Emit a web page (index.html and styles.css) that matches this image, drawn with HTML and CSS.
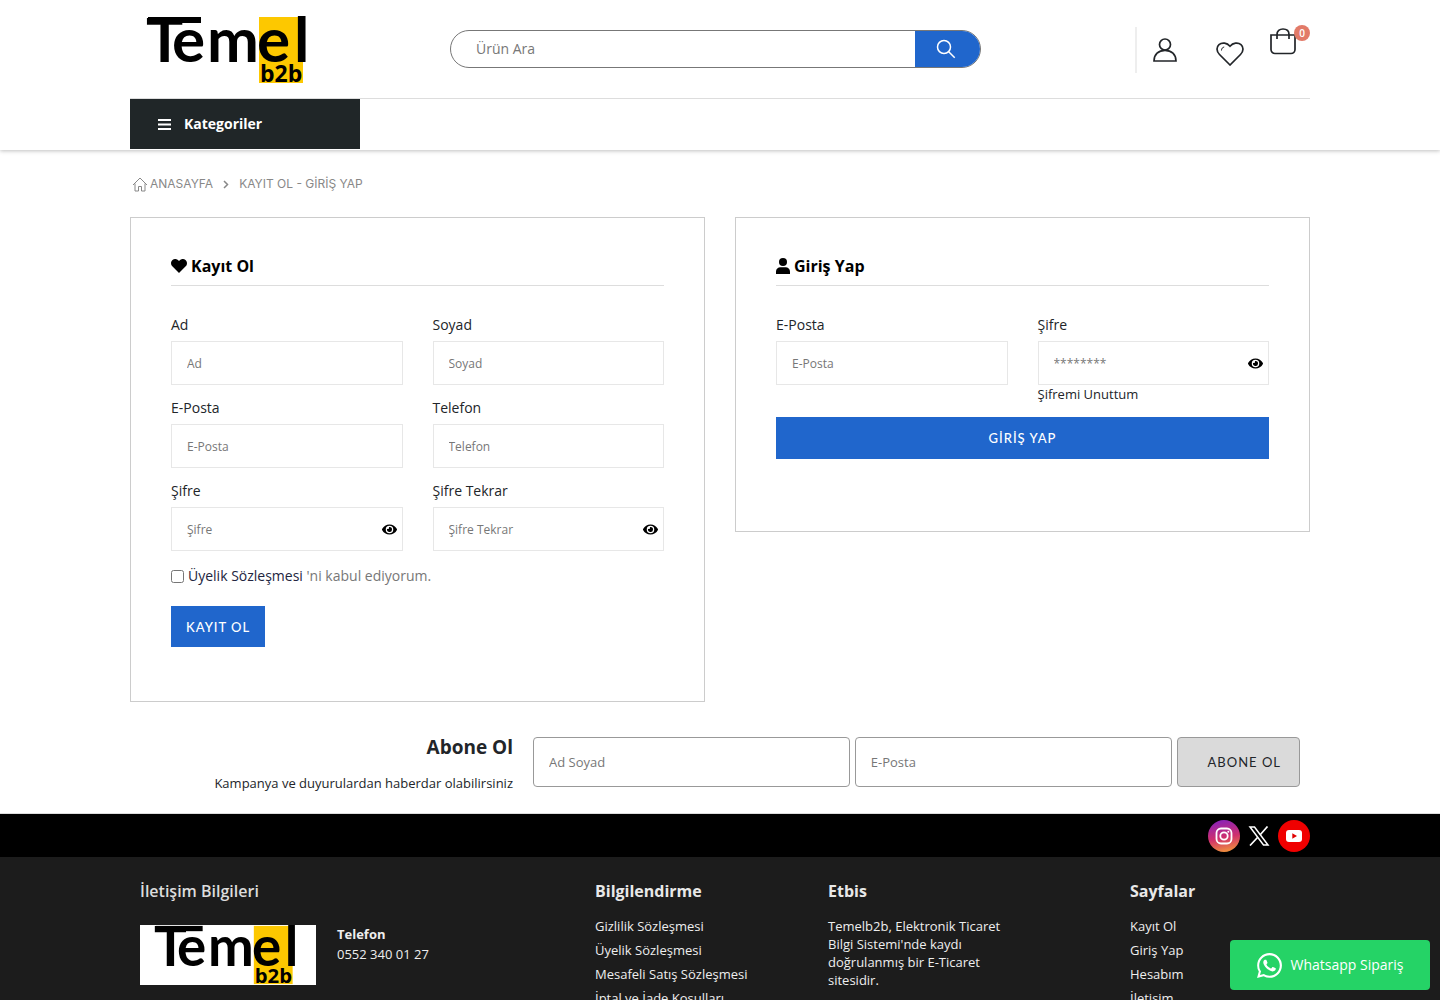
FILE: index.html
```html
<!DOCTYPE html>
<html lang="tr">
<head>
<meta charset="utf-8">
<meta name="viewport" content="width=device-width, initial-scale=1">
<title>Temel b2b - Kayıt Ol - Giriş Yap</title>
<link rel="stylesheet" href="styles.css">
</head>
<body>
<svg class="sprite" aria-hidden="true">
  <symbol id="logo" viewBox="0 0 176 68" preserveAspectRatio="xMinYMin meet">
    <rect x="129" y="1" width="44" height="66" fill="#fdc800"/>
    <rect x="18" y="1" width="53" height="6"/>
    <text class="logo-word" x="16 42 77 127 164" y="46">Temel</text>
    <text class="logo-sub" x="130" y="66">b2b</text>
  </symbol>
  <symbol id="eye" viewBox="0 0 576 512"><path fill-rule="evenodd" d="M572.500 241.400C518.300 135.600 410.900 64 288 64S57.700 135.600 3.500 241.400a32.400 32.400 0 0 0 0 29.200C57.700 376.400 165.100 448 288 448s230.300-71.600 284.500-177.400a32.400 32.400 0 0 0 0-29.200zM288 400a144 144 0 1 1 144-144 143.900 143.900 0 0 1-144 144z"/><path d="M288 160a95.300 95.300 0 0 0-25.300 3.800 47.900 47.900 0 0 1-66.900 66.900A95.800 95.800 0 1 0 288 160z"/></symbol>
</svg>

<header class="header">
  <div class="container header-top">
    <a class="brand" href="#" aria-label="Temel b2b"><svg class="logo"><use href="#logo"/></svg></a>
    <form class="search">
      <input type="search" placeholder="Ürün Ara" aria-label="Ürün Ara">
      <button type="button" aria-label="Ara">
        <svg width="20" height="20" viewBox="0 0 20 20" fill="none" stroke="currentColor" stroke-width="1.500"><circle cx="8" cy="8" r="6.500"/><path d="M12.700 12.700l6 6"/></svg>
      </button>
    </form>
    <nav class="actions" aria-label="Hesap">
      <a class="account" href="#" aria-label="Hesabım"><svg width="24" height="24" viewBox="0 0 24 24"><circle cx="12" cy="6.500" r="5.500"/><path d="M1 23c0-6.500 4.500-10.700 11-10.700S23 16.500 23 23z"/></svg></a>
      <a class="wish" href="#" aria-label="Favoriler"><svg width="28" height="24" viewBox="0 0 28 24"><path d="M14 23L3.500 12.500C.200 9.200.400 5 3 2.700c3-2.600 8-1.900 11 1.500 3-3.400 8-4.100 11-1.500 2.600 2.300 2.800 6.500-.500 9.800z"/><path d="M5.500 8.500c0-2 1-3.200 2.700-3.500" stroke-width="1"/></svg></a>
      <a class="cart" href="#" aria-label="Sepet"><svg width="26" height="27" viewBox="0 0 26 27"><path d="M1 7h24v14.500a4 4 0 0 1-4 4H5a4 4 0 0 1-4-4zM7 11V6.500C7 3 9.500 1 13 1s6 2 6 5.500V11"/></svg><span class="badge">0</span></a>
    </nav>
  </div>
  <div class="container menu-bar">
    <button class="categories" type="button">
      <svg width="13" height="11" viewBox="0 0 13 11" stroke="currentColor" stroke-width="2"><path d="M0 1h13M0 5.500h13M0 10h13"/></svg>
      Kategoriler
    </button>
  </div>
</header>

<main class="container">
  <nav class="crumbs" aria-label="Konum">
    <a href="#"><svg width="16" height="15" viewBox="0 0 16 15" fill="none" stroke="currentColor"><path d="M1 8l7-7 7 7M3 6.500V14h3.500V9.500h3V14H13V6.500"/></svg>ANASAYFA</a>
    <svg width="6" height="9" viewBox="0 0 6 9" fill="none" stroke="currentColor" stroke-width="1.500"><path d="M1 1l3.500 3.500L1 8"/></svg>
    <span>KAYIT OL - GİRİŞ YAP</span>
  </nav>

  <div class="cards">
    <section class="card">
      <h2><svg width="16" height="14" viewBox="0 0 16 14"><path d="M8 14L1.300 7.300C-.500 5.500-.400 2.600 1.500 1 3.300-.500 6-.300 7.500 1.400L8 2l.500-.600C10-.300 12.700-.500 14.500 1c1.900 1.600 2 4.500.200 6.300z"/></svg>Kayıt Ol</h2>
      <form>
        <div class="fields">
          <div class="field"><label for="ad">Ad</label><input id="ad" type="text" placeholder="Ad"></div>
          <div class="field"><label for="soyad">Soyad</label><input id="soyad" type="text" placeholder="Soyad"></div>
          <div class="field"><label for="eposta">E-Posta</label><input id="eposta" type="email" placeholder="E-Posta"></div>
          <div class="field"><label for="telefon">Telefon</label><input id="telefon" type="tel" placeholder="Telefon"></div>
          <div class="field"><label for="sifre">Şifre</label><span class="secret"><input id="sifre" type="password" placeholder="Şifre"><button type="button" aria-label="Göster"><svg><use href="#eye"/></svg></button></span></div>
          <div class="field"><label for="tekrar">Şifre Tekrar</label><span class="secret"><input id="tekrar" type="password" placeholder="Şifre Tekrar"><button type="button" aria-label="Göster"><svg><use href="#eye"/></svg></button></span></div>
        </div>
        <div class="agree"><input id="kabul" type="checkbox"><label for="kabul"><a href="#">Üyelik Sözleşmesi</a> 'ni kabul ediyorum.</label></div>
        <button class="btn" type="button">KAYIT OL</button>
      </form>
    </section>

    <section class="card">
      <h2><svg width="14" height="16" viewBox="0 0 14 16"><circle cx="7" cy="4" r="4"/><path d="M0 16v-2.500C0 11 2 9.300 4.300 9.300h5.400C12 9.300 14 11 14 13.500V16z"/></svg>Giriş Yap</h2>
      <form>
        <div class="fields">
          <div class="field"><label for="g-eposta">E-Posta</label><input id="g-eposta" type="email" placeholder="E-Posta"></div>
          <div class="field"><label for="g-sifre">Şifre</label><span class="secret"><input id="g-sifre" type="password" placeholder="********"><button type="button" aria-label="Göster"><svg><use href="#eye"/></svg></button></span><a class="forgot" href="#">Şifremi Unuttum</a></div>
        </div>
        <button class="btn wide" type="button">GİRİŞ YAP</button>
      </form>
    </section>
  </div>

  <section class="subscribe">
    <div class="subscribe-text"><h3>Abone Ol</h3><p>Kampanya ve duyurulardan haberdar olabilirsiniz</p></div>
    <form class="subscribe-form">
      <input type="text" placeholder="Ad Soyad" aria-label="Ad Soyad">
      <input type="email" placeholder="E-Posta" aria-label="E-Posta">
      <button type="button">ABONE OL</button>
    </form>
  </section>
</main>

<footer>
  <div class="social-bar">
    <div class="container social">
      <a href="#" aria-label="Instagram"><svg width="32" height="32" viewBox="0 0 32 32"><defs><linearGradient id="ig" x1="0.400" y1="0" x2="0.600" y2="1"><stop offset="0" stop-color="#8a22b8"/><stop offset=".55" stop-color="#d0306c"/><stop offset="1" stop-color="#f0923c"/></linearGradient></defs><circle cx="16" cy="16" r="16" fill="url(#ig)"/><g fill="none" stroke="#fff" stroke-width="1.800"><rect x="8.500" y="8.500" width="15" height="15" rx="4.500"/><circle cx="16" cy="16" r="3.700"/></g><circle cx="20.300" cy="11.700" r="1" fill="#fff"/></svg></a>
      <a href="#" aria-label="X"><svg width="22" height="20" viewBox="0 0 22 20" fill="none" stroke="#fff"><path d="M2 1h4.500L20 19h-4.500z" stroke-width="1.500"/><path d="M19.500.500L12 9M9.500 11.500L2 19.500" stroke-width="1.700"/></svg></a>
      <a href="#" aria-label="YouTube"><svg width="32" height="32" viewBox="0 0 32 32"><circle cx="16" cy="16" r="16" fill="#f00000"/><rect x="8" y="10" width="16" height="12" rx="3" fill="#fff"/><path d="M14.300 13.300v5.400l4.700-2.700z" fill="#e00000"/></svg></a>
    </div>
  </div>
  <div class="footer-main">
    <div class="container footer-grid">
      <section>
        <h4 class="light">İletişim Bilgileri</h4>
        <div class="contact">
          <span class="footer-brand"><svg><use href="#logo"/></svg></span>
          <p><strong>Telefon</strong><br>0552 340 01 27</p>
        </div>
      </section>
      <section>
        <h4>Bilgilendirme</h4>
        <ul><li><a href="#">Gizlilik Sözleşmesi</a></li><li><a href="#">Üyelik Sözleşmesi</a></li><li><a href="#">Mesafeli Satış Sözleşmesi</a></li><li><a href="#">İptal ve İade Koşulları</a></li></ul>
      </section>
      <section>
        <h4>Etbis</h4>
        <p class="etbis">Temelb2b, Elektronik Ticaret Bilgi Sistemi'nde kaydı doğrulanmış bir E-Ticaret sitesidir.</p>
      </section>
      <section>
        <h4>Sayfalar</h4>
        <ul><li><a href="#">Kayıt Ol</a></li><li><a href="#">Giriş Yap</a></li><li><a href="#">Hesabım</a></li><li><a href="#">İletişim</a></li></ul>
      </section>
    </div>
  </div>
</footer>

<a class="whatsapp" href="#">
  <svg width="25" height="25" viewBox="0 0 24 24" fill="currentColor"><path d="M.060 24l1.690-6.160A11.870 11.870 0 0 1 .160 11.890C.160 5.340 5.500 0 12.050 0a11.820 11.820 0 0 1 8.410 3.490 11.820 11.820 0 0 1 3.480 8.410c0 6.560-5.340 11.890-11.890 11.890a11.900 11.900 0 0 1-5.690-1.450zM6.600 20.190c1.740 1.030 3.280 1.620 5.390 1.620 5.450 0 9.890-4.430 9.890-9.880 0-5.460-4.420-9.890-9.880-9.890-5.450 0-9.890 4.430-9.890 9.880 0 2.230.650 3.890 1.750 5.630l-1 3.650zM18.050 14.730c-.080-.130-.270-.200-.570-.350-.300-.150-1.760-.870-2.030-.970-.270-.100-.470-.150-.670.150-.200.300-.770.970-.940 1.160-.170.200-.350.220-.640.080-.300-.150-1.260-.460-2.390-1.480-.880-.790-1.480-1.760-1.650-2.060-.170-.300-.020-.460.130-.610.130-.130.300-.350.450-.520.150-.170.200-.300.300-.500.100-.200.050-.370-.020-.520-.080-.150-.670-1.610-.920-2.210-.240-.580-.490-.500-.670-.510l-.570-.010c-.200 0-.520.070-.790.370s-1.040 1.020-1.040 2.480c0 1.460 1.060 2.880 1.210 3.070.150.200 2.100 3.200 5.080 4.490 2.960 1.280 2.960.850 3.490.800.540-.050 1.760-.720 2.010-1.410.250-.690.250-1.290.230-1.450z"/></svg>
  Whatsapp Sipariş
</a>
</body>
</html>
```
FILE: styles.css
```css
* { box-sizing: border-box; }

body {
  margin: 0;
  background: #fff;
  color: #222529;
  font-family: "Open Sans", sans-serif;
  font-size: 14px;
  line-height: 24px;
}

a { color: inherit; text-decoration: none; }
h2, h3, h4, p, ul { margin: 0; padding: 0; }
ul { list-style: none; }
input, button { font: inherit; color: inherit; margin: 0; border-radius: 0; }
button { border: 0; background: none; padding: 0; cursor: pointer; }
svg { display: block; flex: none; }
input { min-width: 0; outline: 0; }
input::placeholder { color: #777; opacity: 1; }

.sprite { position: absolute; width: 0; height: 0; }
.container { width: 100%; max-width: 1180px; margin: 0 auto; }

.logo-word { font: 700 62px Lato, sans-serif; }
.logo-sub { font: 700 23px "Open Sans", sans-serif; }

/* Header */
.header { box-shadow: 0 1px 4px rgba(0, 0, 0, .25); }
.header-top { display: flex; align-items: flex-start; height: 98px; }
.brand { width: 320px; padding: 16px 0 0; }
.logo { width: 176px; height: 68px; }

.search {
  display: flex;
  width: 45%;
  height: 38px;
  margin-top: 30px;
  border: 1px solid #777;
  border-radius: 19px;
  overflow: hidden;
}
.search input { flex: 1; padding: 0 25px; border: 0; background: none; appearance: none; }
.search button {
  display: grid;
  place-items: center;
  width: 65px;
  padding-right: 3px;
  background: #2066cc;
  color: #fff;
}

.actions { display: flex; align-items: flex-start; margin: 27px 0 0 auto; }
.actions svg { fill: none; stroke: #222529; stroke-width: 1.7; }
.account { height: 46px; padding: 11px 0 0 16px; border-left: 2px solid #eee; }
.wish { padding: 15px 26px 0 39px; }
.cart { position: relative; padding: 1px 14px 0 0; }
.badge {
  position: absolute;
  top: -2px;
  right: 0;
  width: 16px;
  height: 16px;
  border-radius: 50%;
  background: #e27a68;
  color: #fff;
  font-size: 10px;
  font-weight: 600;
  line-height: 16px;
  text-align: center;
}

.menu-bar { height: 52px; border-top: 1px solid #ddd; }
.categories {
  display: flex;
  align-items: center;
  gap: 13px;
  width: 230px;
  height: 50px;
  padding-left: 28px;
  background: #202628;
  color: #fff;
  font-weight: 700;
}

/* Breadcrumb */
.crumbs {
  display: flex;
  align-items: center;
  gap: 10px;
  padding: 22px 2px;
  color: #888;
  font-family: Inter, sans-serif;
  font-size: 12px;
}
.crumbs a { display: flex; align-items: center; gap: 2px; }

/* Forms */
.cards { display: grid; grid-template-columns: 1fr 1fr; gap: 30px; align-items: start; }
.card { padding: 36px 40px 54px; border: 1px solid #ccc; margin-top: -1px; }
.card + .card { padding-bottom: 72px; }
.card h2 {
  display: flex;
  align-items: center;
  gap: 4px;
  padding-bottom: 7px;
  margin-bottom: 27px;
  border-bottom: 1px solid #ddd;
  color: #000;
  font-size: 16px;
  font-weight: 700;
}
.fields { display: grid; grid-template-columns: 1fr 1fr; gap: 11px 30px; }
.field { display: flex; flex-direction: column; gap: 4px; }
.field input {
  width: 100%;
  height: 44px;
  padding: 0 15px;
  border: 1px solid #e7e7e7;
  background: #fff;
  font-size: 12px;
}
.secret { position: relative; display: block; height: 44px; }
.secret button { position: absolute; right: 6px; top: 15px; }
.secret svg { width: 15px; height: 15px; }
.forgot { margin-top: -7px; font-size: 13px; }

.agree { display: flex; align-items: center; gap: 4px; margin: 13px 0 18px; color: #777; }
.agree input { width: 13px; height: 13px; }
.agree a { color: #222540; }

.btn {
  height: 41px;
  padding: 0 15px;
  background: #2066cc;
  color: #fff;
  font-family: Lato, sans-serif;
  font-size: 13px;
  font-weight: 500;
  letter-spacing: 1px;
}
.wide { display: block; width: 100%; height: 42px; margin-top: 11px; }

/* Newsletter */
.subscribe { display: flex; gap: 20px; padding: 35px 10px 18px 0; }
.subscribe-text { width: 383px; text-align: right; }
.subscribe-text h3 { margin-bottom: 14px; font-size: 19px; font-weight: 700; line-height: 20px; }
.subscribe-text p { font-size: 13px; }
.subscribe-form { display: flex; flex: 1; gap: 5px; }
.subscribe-form input { flex: 1; height: 50px; padding: 0 15px; font-size: 13px; }
.subscribe-form input, .subscribe-form button { border: 1px solid #999; border-radius: 4px; }
.subscribe-form button {
  height: 50px;
  padding: 0 18px 0 30px;
  background: #dadada;
  font-family: Lato, sans-serif;
  font-size: 13px;
  letter-spacing: 1px;
}

/* Footer */
.social-bar { background: #000; border-top: 1px solid #ddd; }
.social { display: flex; align-items: center; justify-content: flex-end; gap: 8px; height: 43px; }
.footer-main { padding: 22px 0 10px; background: #1c1c1c; color: #eee; font-size: 13px; }
.footer-grid { display: grid; grid-template-columns: 455fr 233fr 302fr 170fr; padding: 0 10px; }
.footer-grid h4 { margin-bottom: 11px; color: #e8e8e8; font-size: 16px; font-weight: 700; }
.footer-grid h4.light { font-weight: 600; color: #ddd; }
.contact { display: flex; gap: 21px; line-height: 20px; }
.contact strong { font-weight: 700; }
.footer-brand { width: 176px; height: 60px; margin-top: 11px; background: #fff; }
.footer-brand svg { width: 176px; height: 60px; }
.contact p { padding-top: 10px; }
.etbis { max-width: 180px; padding-top: 3px; line-height: 18px; }

.whatsapp {
  position: fixed;
  right: 10px;
  bottom: 10px;
  display: flex;
  align-items: center;
  justify-content: center;
  gap: 9px;
  width: 200px;
  height: 50px;
  border-radius: 4px;
  background: #25d366;
  color: #fff;
}
```
